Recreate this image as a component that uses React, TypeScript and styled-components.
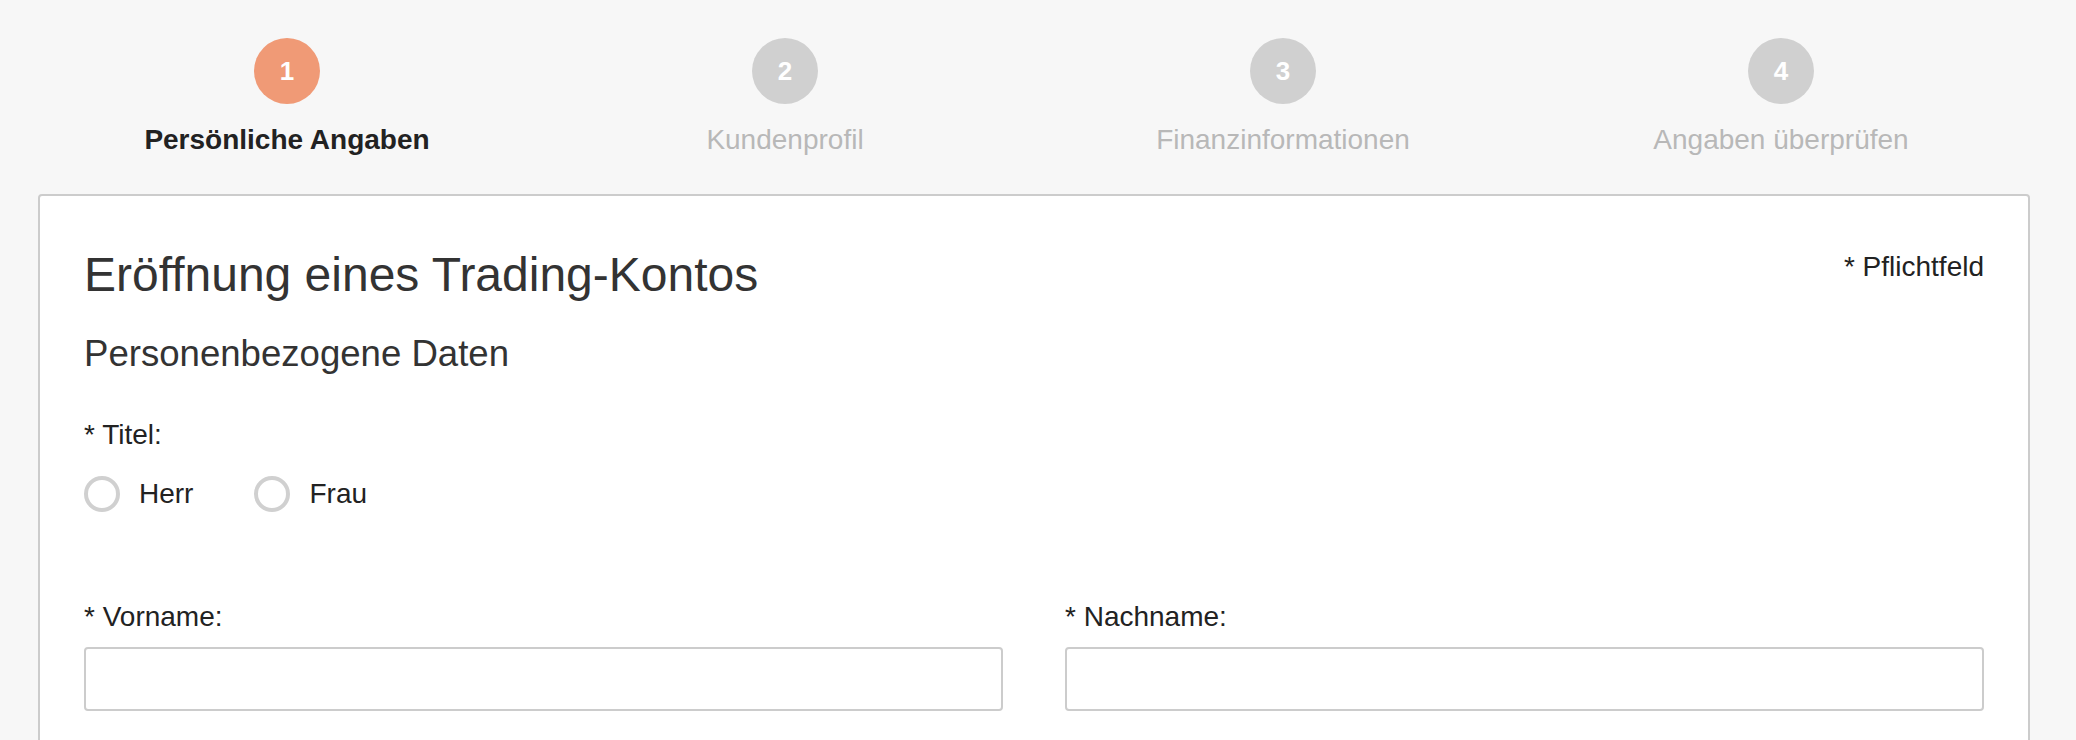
import * as React from 'react';
import styled, { createGlobalStyle } from 'styled-components';

const colors = {
  PAGE: '#f7f7f7',
  WHITE: '#ffffff',
  BORDER: '#cccccc',
  ACCENT: '#f09a76',
  STEP_IDLE: '#d0d0d0',
  STEP_TEXT_IDLE: '#b8b8b8',
  TEXT: '#222222',
  HEADING: '#333333',
};

const GlobalStyle = createGlobalStyle`
  html, body {
    margin: 0;
    padding: 0;
    background: ${colors.PAGE};
  }
  body {
    font-family: "Liberation Sans", Arial, Helvetica, sans-serif;
    color: ${colors.TEXT};
  }
  * {
    box-sizing: border-box;
  }
`;

const Page = styled.div`
  padding: 38px 46px 0 38px;
`;

const Steps = styled.ol`
  list-style: none;
  margin: 0 0 37px;
  padding: 0;
  display: grid;
  grid-template-columns: repeat(4, 1fr);
`;

const Step = styled.li`
  display: flex;
  flex-direction: column;
  align-items: center;
`;

const StepCircle = styled.div<{ $active?: boolean }>`
  width: 66px;
  height: 66px;
  border-radius: 50%;
  background: ${(p) => (p.$active ? colors.ACCENT : colors.STEP_IDLE)};
  color: ${colors.WHITE};
  display: flex;
  align-items: center;
  justify-content: center;
  font-size: 26px;
  font-weight: 700;
  margin-bottom: 19px;
`;

const StepLabel = styled.div<{ $active?: boolean }>`
  font-size: 28px;
  line-height: 1.2;
  font-weight: ${(p) => (p.$active ? 700 : 400)};
  color: ${(p) => (p.$active ? colors.TEXT : colors.STEP_TEXT_IDLE)};
`;

const Card = styled.section`
  background: ${colors.WHITE};
  border: 2px solid ${colors.BORDER};
  border-radius: 4px;
  padding: 50px 44px 60px;
  min-height: 600px;
`;

const CardHeader = styled.div`
  display: flex;
  justify-content: space-between;
  align-items: flex-start;
`;

const Title = styled.h1`
  margin: 0;
  font-size: 48px;
  line-height: 1.2;
  font-weight: 400;
  color: ${colors.HEADING};
`;

const Required = styled.div`
  margin-top: 4px;
  font-size: 28px;
  line-height: 1.2;
  color: ${colors.TEXT};
`;

const SectionTitle = styled.h2`
  margin: 29px 0 0;
  font-size: 36.6px;
  line-height: 1.2;
  font-weight: 400;
  color: ${colors.HEADING};
`;

const Label = styled.div<{ $gap?: number }>`
  margin-top: ${(p) => p.$gap ?? 0}px;
  font-size: 28px;
  line-height: 1.2;
  color: ${colors.TEXT};
`;

const RadioGroup = styled.div`
  display: flex;
  align-items: center;
  gap: 61px;
  margin-top: 24px;
`;

const RadioOption = styled.label`
  display: flex;
  align-items: center;
  gap: 19px;
  font-size: 28px;
  line-height: 1.2;
  color: ${colors.TEXT};
  cursor: pointer;
`;

const RadioDot = styled.span`
  width: 36px;
  height: 36px;
  border-radius: 50%;
  border: 4px solid ${colors.STEP_IDLE};
  background: ${colors.WHITE};
`;

const FieldRow = styled.div`
  display: grid;
  grid-template-columns: 1fr 1fr;
  column-gap: 62px;
  margin-top: 88px;
`;

const Field = styled.div`
  display: flex;
  flex-direction: column;
`;

const Input = styled.input`
  margin-top: 14px;
  height: 64px;
  width: 100%;
  border: 2px solid ${colors.BORDER};
  border-radius: 4px;
  background: ${colors.WHITE};
  font-family: inherit;
  font-size: 28px;
  padding: 0 16px;
  outline: none;
`;

const steps = ['Persönliche Angaben', 'Kundenprofil', 'Finanzinformationen', 'Angaben überprüfen'];

const App: React.FC<{}> = () => (
  <>
    <GlobalStyle />
    <Page>
      <Steps>
        {steps.map((s, i) => (
          <Step key={s}>
            <StepCircle $active={i === 0}>{i + 1}</StepCircle>
            <StepLabel $active={i === 0}>{s}</StepLabel>
          </Step>
        ))}
      </Steps>
      <Card>
        <CardHeader>
          <Title>Eröffnung eines Trading-Kontos</Title>
          <Required>* Pflichtfeld</Required>
        </CardHeader>
        <SectionTitle>Personenbezogene Daten</SectionTitle>
        <Label $gap={42}>* Titel:</Label>
        <RadioGroup>
          <RadioOption>
            <RadioDot />
            Herr
          </RadioOption>
          <RadioOption>
            <RadioDot />
            Frau
          </RadioOption>
        </RadioGroup>
        <FieldRow>
          <Field>
            <Label>* Vorname:</Label>
            <Input type="text" />
          </Field>
          <Field>
            <Label>* Nachname:</Label>
            <Input type="text" />
          </Field>
        </FieldRow>
      </Card>
    </Page>
  </>
);

export default App;
